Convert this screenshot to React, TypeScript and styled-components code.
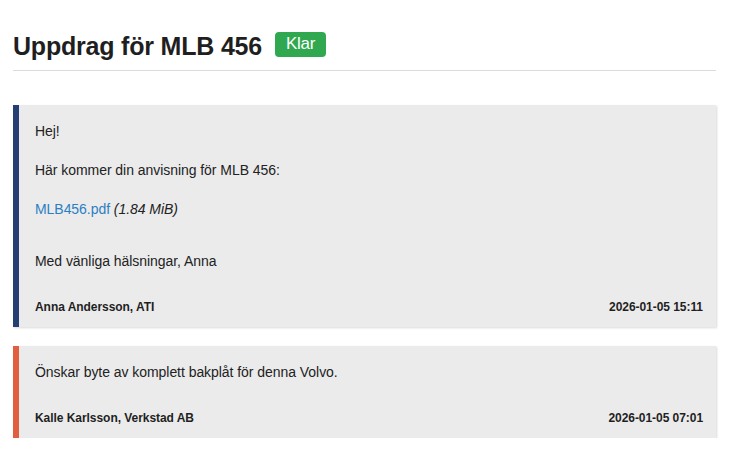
import styled, { createGlobalStyle } from 'styled-components'

const GlobalStyle = createGlobalStyle`
  body {
    margin: 0;
    background: #fff;
    color: #222;
    font-family: 'Liberation Sans', Arial, Helvetica, sans-serif;
  }
`

const Page = styled.div`
  padding: 0 17px 0 13px;
`

const Header = styled.header`
  display: flex;
  align-items: center;
  gap: 13px;
  padding: 31px 0 9px;
  border-bottom: 1px solid #dcdcdc;
`

const Title = styled.h1`
  margin: 0;
  font-size: 25px;
  line-height: 30px;
  font-weight: bold;
  letter-spacing: -0.2px;
  color: #1f1f1f;
`

const Badge = styled.span`
  display: inline-flex;
  align-items: center;
  height: 25px;
  margin-bottom: 4px;
  padding: 0 11px;
  border-radius: 4px;
  background: #2fa84f;
  color: #fff;
  font-size: 17px;
  letter-spacing: -0.3px;
`

const Thread = styled.section`
  margin-top: 34px;
  display: flex;
  flex-direction: column;
  gap: 19px;
`

const Card = styled.article<{ $accent: string }>`
  background: #ebebeb;
  border-left: 6px solid ${p => p.$accent};
  padding: 16px 13px 11px 16px;
  box-shadow: 1px 1px 2px rgba(0, 0, 0, 0.15);
  font-size: 14px;
  line-height: 20px;
  letter-spacing: -0.05px;
`

const Paragraph = styled.p<{ $space?: number }>`
  margin: 0 0 ${p => p.$space ?? 19}px;
  &:last-child {
    margin-bottom: 0;
  }
`

const FileLink = styled.a`
  color: #2b7fc4;
  text-decoration: none;
`

const Size = styled.em`
  font-style: italic;
`

const Footer = styled.footer`
  display: flex;
  justify-content: space-between;
  margin-top: 28px;
  font-size: 12px;
  line-height: 17px;
  font-weight: bold;
  color: #1f1f1f;
`

type Message = {
  accent: string
  author: string
  time: string
  body: React.ReactNode
}

const messages: Message[] = [
  {
    accent: '#253f74',
    author: 'Anna Andersson, ATI',
    time: '2026-01-05 15:11',
    body: (
      <>
        <Paragraph>Hej!</Paragraph>
        <Paragraph>Här kommer din anvisning för MLB 456:</Paragraph>
        <Paragraph $space={32}>
          <FileLink href='#'>MLB456.pdf</FileLink> <Size>(1.84 MiB)</Size>
        </Paragraph>
        <Paragraph>Med vänliga hälsningar, Anna</Paragraph>
      </>
    ),
  },
  {
    accent: '#e15f3e',
    author: 'Kalle Karlsson, Verkstad AB',
    time: '2026-01-05 07:01',
    body: <Paragraph>Önskar byte av komplett bakplåt för denna Volvo.</Paragraph>,
  },
]

const App = () => {
  return (
    <Page>
      <GlobalStyle />
      <Header>
        <Title>Uppdrag för MLB 456</Title>
        <Badge>Klar</Badge>
      </Header>
      <Thread>
        {messages.map(m => (
          <Card key={m.time} $accent={m.accent}>
            <div>{m.body}</div>
            <Footer>
              <span>{m.author}</span>
              <span>{m.time}</span>
            </Footer>
          </Card>
        ))}
      </Thread>
    </Page>
  )
}

export default App
